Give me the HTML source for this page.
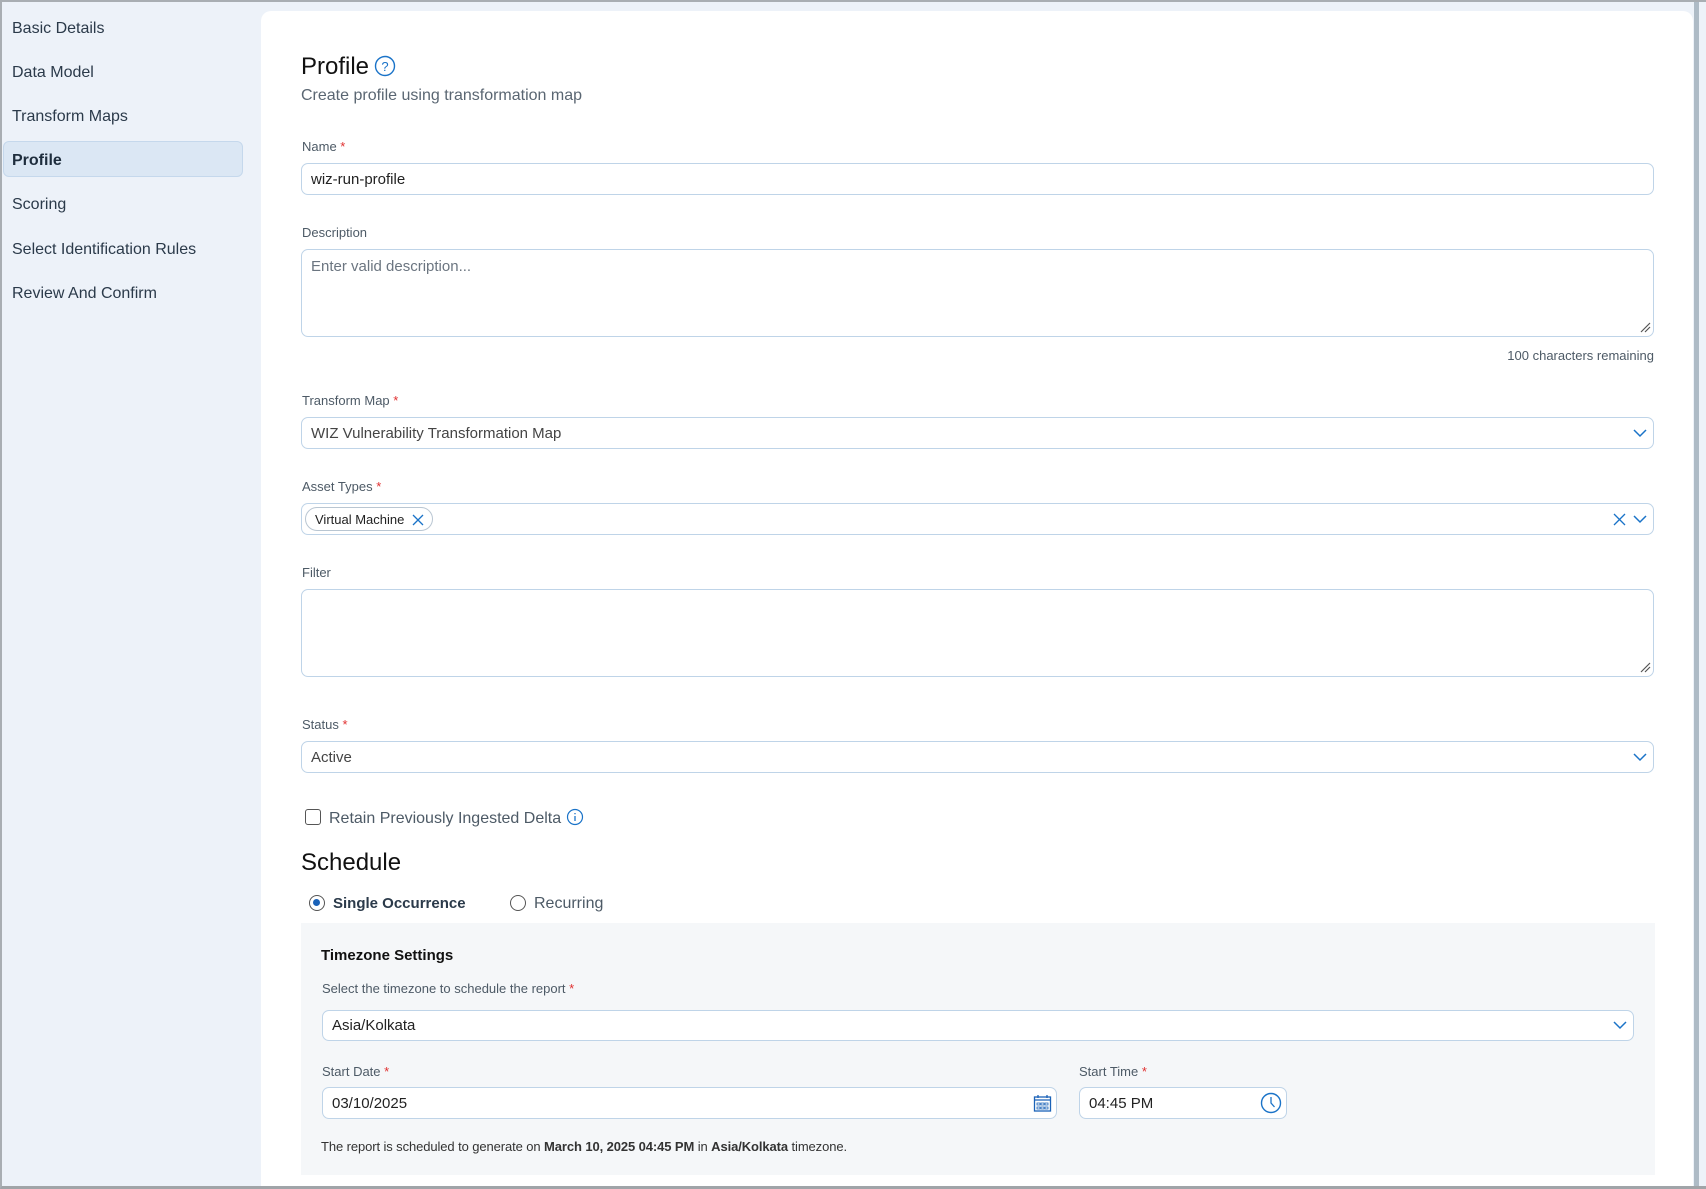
<!DOCTYPE html>
<html><head><meta charset="utf-8"><style>
*{box-sizing:border-box;margin:0;padding:0}
body{width:1706px;height:1189px;overflow:hidden;background:#edf2f9;font-family:"Liberation Sans",Arial,sans-serif;position:relative;color:#333}
.frame{position:absolute;left:0;top:0;width:1706px;height:1189px;border:2px solid #a9aeb3;border-right:none;border-bottom:3px solid #a0a4a8}
.side{position:absolute;left:12px;font-size:16px;color:#2b3a4a}
.hl{position:absolute;left:3px;top:141px;width:240px;height:36px;background:#dbe7f4;border:1px solid #c5d8ec;border-radius:6px}
.card{position:absolute;left:261px;top:11px;width:1432px;height:1175px;background:#fff;border-radius:10px 10px 0 0}
.sb{position:absolute;left:1694px;top:0;width:5px;height:1189px;background:#aebbc6}
.a{position:absolute}
.lbl{position:absolute;font-size:13px;color:#4d5a66}
.lbl b{color:#e03030;font-weight:normal}
.in{position:absolute;background:#fff;border:1px solid #bfd4e8;border-radius:7px;font-size:15px;color:#222;padding-left:9px;display:flex;align-items:center}
.ta{align-items:flex-start;padding-top:8px}
.ph{color:#6b7580}
svg{position:absolute}
</style></head><body>
<div class="hl"></div>
<div class="side" style="top:20px">Basic Details</div>
<div class="side" style="top:64px">Data Model</div>
<div class="side" style="top:108px">Transform Maps</div>
<div class="side" style="top:152px;font-weight:bold;color:#1e2d3d">Profile</div>
<div class="side" style="top:196px">Scoring</div>
<div class="side" style="top:241px">Select Identification Rules</div>
<div class="side" style="top:285px">Review And Confirm</div>
<div class="card"></div>
<div class="sb"></div>

<div class="a" style="left:301px;top:53px;font-size:24px;color:#111">Profile</div>
<svg style="left:374px;top:55px" width="22" height="22" viewBox="0 0 22 22"><circle cx="11" cy="11" r="9.5" fill="none" stroke="#1a73c8" stroke-width="1.4"/><text x="11" y="16" font-size="13" text-anchor="middle" fill="#1a73c8" font-family="Liberation Sans">?</text></svg>
<div class="a" style="left:301px;top:87px;font-size:16px;color:#5a6672">Create profile using transformation map</div>

<div class="lbl" style="left:302px;top:139px">Name <b>*</b></div>
<div class="in" style="left:301px;top:163px;width:1353px;height:32px">wiz-run-profile</div>
<div class="lbl" style="left:302px;top:225px">Description</div>
<div class="in ta ph" style="left:301px;top:249px;width:1353px;height:88px">Enter valid description...</div>
<svg style="left:1640px;top:322px" width="11" height="11"><path d="M1 10L10 1M5 10L10 5" stroke="#555" stroke-width="1.2"/></svg>
<div class="a" style="top:348px;width:1254px;text-align:right;font-size:13px;color:#4d5a66;left:400px">100 characters remaining</div>

<div class="lbl" style="left:302px;top:393px">Transform Map <b>*</b></div>
<div class="in" style="left:301px;top:417px;width:1353px;height:32px;color:#444">WIZ Vulnerability Transformation Map</div>
<svg style="left:1632px;top:427px" width="16" height="12"><path d="M2 3l6 6 6-6" fill="none" stroke="#1a73c8" stroke-width="1.5"/></svg>

<div class="lbl" style="left:302px;top:479px">Asset Types <b>*</b></div>
<div class="in" style="left:301px;top:503px;width:1353px;height:32px;padding-left:3px">
<span style="display:inline-flex;align-items:center;height:24px;border:1px solid #b9c6d2;border-radius:12px;padding:0 28px 0 9px;font-size:13px;position:relative">Virtual Machine<svg style="right:8px;top:6px" width="12" height="12"><path d="M1 1l10 10M11 1L1 11" stroke="#1a73c8" stroke-width="1.3"/></svg></span></div>
<svg style="left:1613px;top:513px" width="13" height="13"><path d="M1 1l11 11M12 1L1 12" stroke="#1a73c8" stroke-width="1.3"/></svg>
<svg style="left:1632px;top:513px" width="16" height="12"><path d="M2 3l6 6 6-6" fill="none" stroke="#1a73c8" stroke-width="1.5"/></svg>

<div class="lbl" style="left:302px;top:565px">Filter</div>
<div class="in ta" style="left:301px;top:589px;width:1353px;height:88px"></div>
<svg style="left:1640px;top:662px" width="11" height="11"><path d="M1 10L10 1M5 10L10 5" stroke="#555" stroke-width="1.2"/></svg>

<div class="lbl" style="left:302px;top:717px">Status <b>*</b></div>
<div class="in" style="left:301px;top:741px;width:1353px;height:32px;color:#444">Active</div>
<svg style="left:1632px;top:751px" width="16" height="12"><path d="M2 3l6 6 6-6" fill="none" stroke="#1a73c8" stroke-width="1.5"/></svg>

<div class="a" style="left:305px;top:809px;width:16px;height:16px;border:1.5px solid #555;border-radius:3px"></div>
<div class="a" style="left:329px;top:810px;font-size:16px;color:#4d5a66">Retain Previously Ingested Delta</div>
<svg style="left:566px;top:808px" width="18" height="18"><circle cx="9" cy="9" r="7.5" fill="none" stroke="#1a73c8" stroke-width="1.2"/><path d="M9 8v5M9 5v1.2" stroke="#1a73c8" stroke-width="1.3"/></svg>

<div class="a" style="left:301px;top:849px;font-size:24px;color:#111">Schedule</div>
<div class="a" style="left:309px;top:895px;width:16px;height:16px;border:1.5px solid #555;border-radius:50%"><div style="margin:3px;width:7px;height:7px;border-radius:50%;background:#1a62b8"></div></div>
<div class="a" style="left:333px;top:895px;font-size:15px;font-weight:bold;color:#2b3a4a">Single Occurrence</div>
<div class="a" style="left:510px;top:895px;width:16px;height:16px;border:1.5px solid #555;border-radius:50%"></div>
<div class="a" style="left:534px;top:895px;font-size:16px;color:#4d5a66">Recurring</div>

<div class="a" style="left:301px;top:923px;width:1354px;height:252px;background:#f5f7f9"></div>
<div class="a" style="left:321px;top:947px;font-size:15px;font-weight:bold;color:#111">Timezone Settings</div>
<div class="lbl" style="left:322px;top:981px">Select the timezone to schedule the report <b>*</b></div>
<div class="in" style="left:322px;top:1010px;width:1312px;height:31px">Asia/Kolkata</div>
<svg style="left:1612px;top:1019px" width="16" height="12"><path d="M2 3l6 6 6-6" fill="none" stroke="#1a73c8" stroke-width="1.5"/></svg>
<div class="lbl" style="left:322px;top:1064px">Start Date <b>*</b></div>
<div class="in" style="left:322px;top:1087px;width:735px;height:32px">03/10/2025</div>
<svg style="left:1033px;top:1094px" width="20" height="18"><rect x="1.5" y="3" width="16" height="14" fill="none" stroke="#1a62b8" stroke-width="1.3"/><path d="M1.5 6h16M5 1v3M14 1v3" stroke="#1a62b8" stroke-width="1.3"/><path d="M4 9h3v2H4zM8 9h3v2H8zM12 9h3v2h-3zM4 13h3v2H4zM8 13h3v2H8zM12 13h3v2h-3z" fill="none" stroke="#1a62b8" stroke-width=".8"/></svg>
<div class="lbl" style="left:1079px;top:1064px">Start Time <b>*</b></div>
<div class="in" style="left:1079px;top:1087px;width:208px;height:32px">04:45 PM</div>
<svg style="left:1260px;top:1092px" width="22" height="22"><circle cx="11" cy="11" r="9.5" fill="none" stroke="#1a73c8" stroke-width="1.4"/><path d="M11 5v6l3.5 4" fill="none" stroke="#1a73c8" stroke-width="1.3"/></svg>
<div class="a" style="left:321px;top:1139px;font-size:13px;color:#333;letter-spacing:-0.1px">The report is scheduled to generate on <b>March 10, 2025 04:45 PM</b> in <b>Asia/Kolkata</b> timezone.</div>
<div class="frame"></div>
</body></html>
